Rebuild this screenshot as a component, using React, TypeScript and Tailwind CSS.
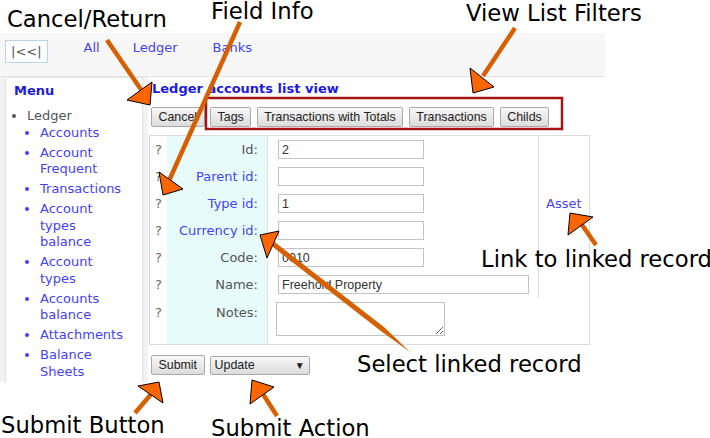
import React from 'react';

const MENU_ITEMS = [
  'Accounts',
  'Account Frequent',
  'Transactions',
  'Account types balance',
  'Account types',
  'Accounts balance',
  'Attachments',
  'Balance Sheets',
];

const FILTERS = ['Tags', 'Transactions with Totals', 'Transactions', 'Childs'];

interface FieldRow {
  label: string;
  linked?: boolean;
  value: string;
  wide?: boolean;
}

const FIELDS: FieldRow[] = [
  { label: 'Id', value: '2' },
  { label: 'Parent id', linked: true, value: '' },
  { label: 'Type id', linked: true, value: '1' },
  { label: 'Currency id', linked: true, value: '' },
  { label: 'Code', value: '0010' },
  { label: 'Name', value: 'Freehold Property', wide: true },
];

const btn =
  "h-[20px] rounded-[2px] border border-[#a9a9a9] bg-gradient-to-b from-[#f8f8f8] to-[#dcdcdc] px-[6.5px] font-['Liberation_Sans',Arial,sans-serif] text-[12.4px] leading-[18px] text-[#222]";

const inputCls =
  "h-[19px] border border-[#c3c3c3] px-[3px] font-['Liberation_Sans',Arial,sans-serif] text-[12.5px] text-[#333] outline-none";

const note = "absolute font-['DejaVu_Sans',sans-serif] text-[22.7px] leading-[22px] text-black whitespace-nowrap";

function Arrows() {
  const line = '#d65f00';
  const head = '#ff6600';
  return (
    <svg className="pointer-events-none absolute inset-0" width="710" height="438" viewBox="0 0 710 438">
      <rect x="206" y="98" width="356" height="31" fill="none" stroke="#a31414" strokeWidth="2.5" />
      {/* cancel / return */}
      <line x1="107" y1="40" x2="142" y2="91" stroke={line} strokeWidth="4.5" />
      <polygon points="152,82 127,100 150,105" fill={head} stroke="#000" strokeWidth="1" />
      {/* field info */}
      <line x1="240" y1="22" x2="168" y2="183" stroke={line} strokeWidth="4.5" />
      <polygon points="159,172 183,189 163,195" fill={head} stroke="#000" strokeWidth="1" />
      {/* view list filters */}
      <line x1="515" y1="28" x2="483" y2="76" stroke={line} strokeWidth="4.5" />
      <polygon points="470,68 494,87 473,93" fill={head} stroke="#000" strokeWidth="1" />
      {/* select linked record */}
      <polygon points="269.5,238 384.5,327.5 410,352 381.5,331.5 266.5,242" fill={line} />
      <polygon points="260,235 279,231 267,258" fill={head} stroke="#000" strokeWidth="1" />
      {/* link to linked record */}
      <line x1="596" y1="245" x2="580" y2="222" stroke={line} strokeWidth="4.5" />
      <polygon points="570,213 593,217 568,235" fill={head} stroke="#000" strokeWidth="1" />
      {/* submit button */}
      <line x1="135" y1="413" x2="153" y2="392" stroke={line} strokeWidth="4.5" />
      <polygon points="138,386 159,382 163,403" fill={head} stroke="#000" strokeWidth="1" />
      {/* submit action */}
      <line x1="277" y1="416" x2="261" y2="391" stroke={line} strokeWidth="4.5" />
      <polygon points="252,380 274,387 250,404" fill={head} stroke="#000" strokeWidth="1" />
    </svg>
  );
}

export default function App() {
  return (
    <div className="relative h-[438px] w-[710px] overflow-hidden bg-white font-['DejaVu_Sans',sans-serif]">
      <div className="w-[605px] pt-[33px]">
        {/* top bar */}
        <div className="flex h-[44px] items-start border-b border-[#e4e4e4] bg-[#f7f7f7] pl-[5px] pt-[7px] text-[13px] leading-[16px]">
          <div className="flex h-[23px] items-center border border-[#b9d3ea] bg-[#fcfdff] px-[5px] text-[#555]">|&lt;&lt;|</div>
          <a className="ml-[36px] text-[#4343f5]">All</a>
          <a className="ml-[33px] text-[#4343f5]">Ledger</a>
          <a className="ml-[35px] text-[#4343f5]">Banks</a>
        </div>

        <div className="flex h-[305px] gap-[5px] bg-[#f2f2f2] pl-[5px]">
          {/* menu */}
          <div className="w-[138px] border-l border-t border-r border-[#e2e2e2] bg-white pt-[4px] text-[13px] leading-[16.5px]">
            <div className="mb-[9px] pl-[8px] font-bold leading-[17px] text-[#1c1cdd]">Menu</div>
            <ul className="list-disc pl-[21px] pr-[14px] text-[#555]">
              <li>
                Ledger
                <ul className="list-disc pl-[13px]">
                  {MENU_ITEMS.map((item) => (
                    <li key={item} className="mb-[3.5px] text-[#4343f5]">
                      {item}
                    </li>
                  ))}
                </ul>
              </li>
            </ul>
          </div>

          {/* main */}
          <div className="flex-1 bg-white pl-[1px] pt-[4px]">
            <div className="pl-[3px] text-[13px] font-bold leading-[16px] text-[#1c1cdd]">Ledger accounts list view</div>

            <div className="ml-[2px] mt-[10px] flex gap-[5.5px]">
              <button className={btn}>Cancel</button>
              {FILTERS.map((f) => (
                <button key={f} className={btn}>
                  {f}
                </button>
              ))}
            </div>

            <div className="mt-[8px] grid w-[441px] grid-cols-[17px_101px_270px_51px] grid-rows-[27px_27px_27px_27px_27px_27px_46px] border border-[#dcdcdc] text-[13px]">
              <div className="col-start-4 row-span-6 row-start-1 border-l border-[#dcdcdc] pl-[7px] pt-[60px] leading-[15px] text-[#4343f5]">
                Asset
              </div>
              {FIELDS.map((row) => (
                <React.Fragment key={row.label}>
                  <div className="flex items-center justify-center text-[#666]">?</div>
                  <div
                    className={`flex items-center justify-end border-r border-[#e0e0e0] bg-[#e8fbfb] pr-[9px] ${
                      row.linked ? 'text-[#4343f5]' : 'text-[#555]'
                    }`}
                  >
                    {row.label}:
                  </div>
                  <div className="flex items-center pl-[10px]">
                    <input readOnly defaultValue={row.value} className={`${inputCls} ${row.wide ? 'w-[251px]' : 'w-[146px]'}`} />
                  </div>
                </React.Fragment>
              ))}
              <div className="flex justify-center pt-[5px] text-[#666]">?</div>
              <div className="border-r border-[#e0e0e0] bg-[#e8fbfb] pr-[9px] pt-[5px] text-right text-[#555]">Notes:</div>
              <div className="col-span-2 pl-[8px] pt-[4px]">
                <textarea readOnly className="block h-[34px] w-[169px] border border-[#c3c3c3] outline-none" />
              </div>
            </div>

            <div className="ml-[2px] mt-[10px] flex items-center gap-[5px]">
              <button className={btn}>Submit</button>
              <div className="flex h-[19px] w-[100px] items-center justify-between rounded-[2px] border border-[#a9a9a9] bg-gradient-to-b from-[#f8f8f8] to-[#dcdcdc] pl-[4px] pr-[4px] font-['Liberation_Sans',Arial,sans-serif] text-[12.4px] text-[#222]">
                <span>Update</span>
                <span className="text-[10px]">▼</span>
              </div>
            </div>
          </div>
        </div>
      </div>

      <Arrows />

      <div className={`${note} left-[7px] top-[8px]`}>Cancel/Return</div>
      <div className={`${note} left-[211px] top-[0px]`}>Field Info</div>
      <div className={`${note} left-[466px] top-[2px]`}>View List Filters</div>
      <div className={`${note} left-[481px] top-[248px]`}>Link to linked record</div>
      <div className={`${note} left-[357px] top-[353px]`}>Select linked record</div>
      <div className={`${note} left-[1px] top-[414px]`}>Submit Button</div>
      <div className={`${note} left-[211px] top-[417px]`}>Submit Action</div>
    </div>
  );
}
